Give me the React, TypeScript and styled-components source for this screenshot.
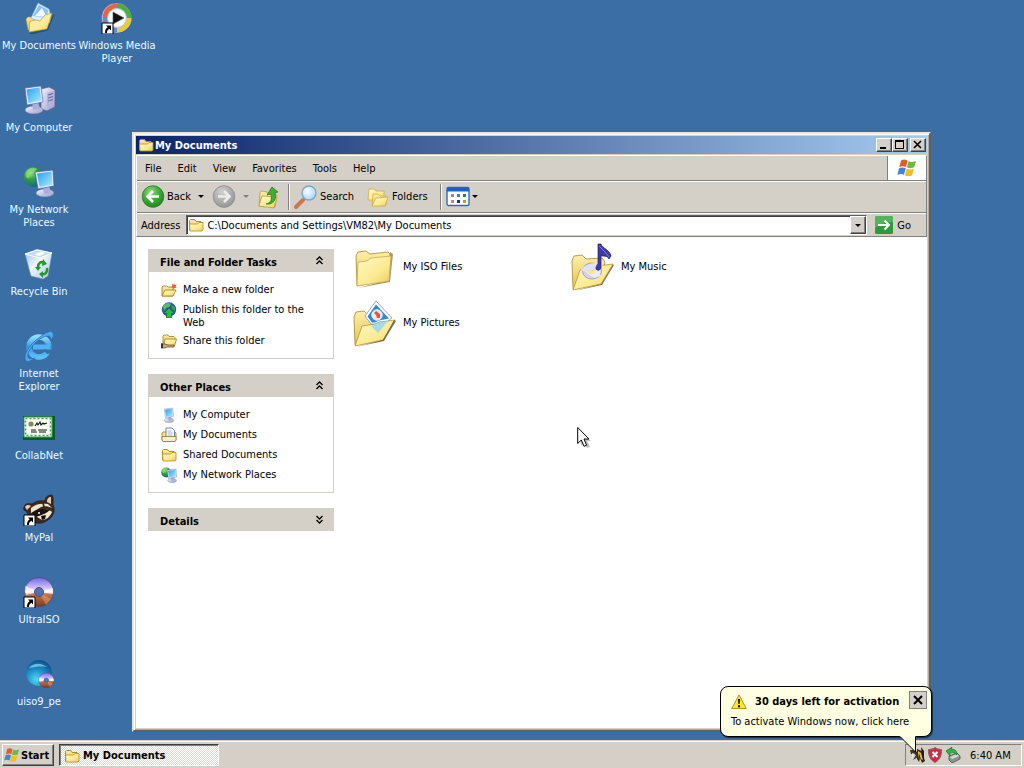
import React from "react";
import styled, { createGlobalStyle, css } from "styled-components";

const face = "#d4d0c8";

const GlobalStyle = createGlobalStyle`
  * { box-sizing: border-box; }
  html, body { margin: 0; height: 100%; overflow: hidden; }
  #root { height: 100%; }
  body, button, input {
    font-family: "DejaVu Sans Condensed", "DejaVu Sans", sans-serif;
    font-size: 11px;
    line-height: 13px;
    color: #000;
  }
  button { border: 0; padding: 0; background: none; cursor: inherit; }
  a { color: inherit; text-decoration: none; cursor: inherit; }
  svg { display: block; flex: none; }
  ul { list-style: none; margin: 0; padding: 0; }
`;

const raised = css`
  border: 1px solid;
  border-color: #fff #404040 #404040 #fff;
  box-shadow: inset -1px -1px 0 #808080;
  background: ${face};
`;

const Screen = styled.div`
  height: 100%;
  display: flex;
  flex-direction: column;
  background: #3a6ea5;
  cursor: default;
`;

const Desktop = styled.main`
  position: relative;
  flex: 1;
  min-height: 0;
  display: flex;
`;

const IconColumn = styled.ul`
  width: 78px;
  display: grid;
  grid-auto-rows: 82px;
  align-content: start;
`;

const DesktopIcon = styled.a`
  display: flex;
  flex-direction: column;
  align-items: center;
  gap: 5px;
  padding-top: 2px;
  text-align: center;
  color: #eafcff;
`;

/* ---------- explorer window ---------- */

const Window = styled.section`
  position: absolute;
  top: 132px;
  left: 132px;
  right: 93px;
  bottom: 8px;
  display: flex;
  flex-direction: column;
  padding: 2px;
  background: ${face};
  border: 2px solid;
  border-color: #e8e6e0 #606060 #606060 #e8e6e0;
  box-shadow: inset 1px 1px 0 #fff, inset -1px -1px 0 #b0aca4;
`;

const TitleBar = styled.header`
  height: 18px;
  display: flex;
  align-items: center;
  gap: 1px;
  padding: 0 1px 0 2px;
  background: linear-gradient(to right, #0a246a, #a6caf0);
`;

const Title = styled.h1`
  flex: 1;
  margin: 0;
  font-size: 11px;
  color: #fff;
`;

const CaptionButtons = styled.div`
  display: flex;
`;

const CaptionButton = styled.button<{ $apart?: boolean }>`
  ${raised}
  width: 16px;
  height: 14px;
  margin-left: ${(p) => (p.$apart ? 2 : 0)}px;
  display: grid;
  place-items: center;
`;

const Bars = styled.div`
  margin-top: 1px;
  border: 1px solid #808080;
  border-color: #fff #808080 #808080 #fff;
`;

const Bar = styled.div<{ $height: number }>`
  height: ${(p) => p.$height}px;
  display: flex;
  align-items: center;
  & + & {
    border-top: 1px solid #808080;
    box-shadow: inset 0 1px 0 #fff;
  }
`;

const Menu = styled.nav`
  flex: 1;
  display: flex;
`;

const MenuItem = styled.button`
  padding: 0 8px;
`;

const Brand = styled.div`
  width: 39px;
  height: 100%;
  display: grid;
  place-items: center;
  background: #fff;
  border-left: 1px solid #808080;
`;

const ToolBar = styled(Bar)`
  padding: 0 4px;
`;

const ToolButton = styled.button<{ $after?: number }>`
  display: flex;
  align-items: center;
  gap: 2px;
  margin-right: ${(p) => p.$after ?? 7}px;
`;

const Caret = styled.span<{ $muted?: boolean; $after?: number }>`
  margin-right: ${(p) => p.$after ?? 0}px;
  border: 3px solid transparent;
  border-bottom: 0;
  border-top-color: ${(p) => (p.$muted ? "#808080" : "#000")};
`;

const Separator = styled.span`
  width: 2px;
  height: 26px;
  border-left: 1px solid #808080;
  border-right: 1px solid #fff;
  margin-right: 4px;
`;

const AddressBar = styled(Bar).attrs({ as: "form" })`
  padding: 1px 4px 0;
  gap: 6px;
`;

const AddressField = styled.div`
  flex: 1;
  height: 20px;
  display: flex;
  align-items: center;
  gap: 3px;
  padding-left: 1px;
  background: #fff;
  border: 1px solid;
  border-color: #606060 #fff #fff #606060;
  box-shadow: inset 1px 1px 0 #404040;
`;

const AddressInput = styled.input`
  flex: 1;
  min-width: 0;
  border: 0;
  padding: 0;
  outline: 0;
  background: transparent;
`;

const DropButton = styled.button`
  ${raised}
  width: 16px;
  height: 18px;
  display: grid;
  place-items: center;
`;

const GoButton = styled.button`
  display: flex;
  align-items: center;
  gap: 4px;
  padding: 0 11px 0 2px;
`;

const Body = styled.div`
  flex: 1;
  min-height: 0;
  display: flex;
  background: #fff;
`;

const TaskPane = styled.aside`
  width: 198px;
  padding: 12px 0 0 12px;
  display: flex;
  flex-direction: column;
  gap: 15px;
`;

const PanelHead = styled.button`
  width: 100%;
  height: 23px;
  display: flex;
  align-items: center;
  justify-content: space-between;
  padding: 0 10px 0 12px;
  font-weight: bold;
  background: ${face};
  span { padding-top: 3px; }
`;

const PanelBody = styled.ul`
  display: flex;
  flex-direction: column;
  gap: 4px;
  padding: 10px 12px 9px;
  border: 1px solid ${face};
  border-top: 0;
`;

const TaskLink = styled.a`
  display: flex;
  gap: 6px;
  min-height: 16px;
  span { padding-top: 1px; }
`;

const Files = styled.ul`
  flex: 1;
  display: grid;
  grid-template-columns: repeat(auto-fill, 218px);
  grid-auto-rows: 56px;
  padding: 2px 0 0 17px;
`;

const FileItem = styled.a`
  height: 100%;
  display: flex;
  align-items: center;
  gap: 4px;
  span { padding-bottom: 2px; }
`;

const Pointer = styled.div`
  position: absolute;
  left: 577px;
  top: 426px;
`;

/* ---------- taskbar ---------- */

const TaskBar = styled.footer`
  height: 28px;
  display: flex;
  gap: 5px;
  padding: 2px;
  background: ${face};
  border-top: 1px solid ${face};
  box-shadow: inset 0 1px 0 #fff;
`;

const StartButton = styled.button`
  ${raised}
  height: 22px;
  width: 52px;
  margin-top: 1px;
  display: flex;
  align-items: center;
  gap: 1px;
  padding-left: 1px;
  font-weight: bold;
`;

const TaskButton = styled.button`
  width: 160px;
  height: 22px;
  margin-top: 1px;
  display: flex;
  align-items: center;
  gap: 3px;
  padding: 1px 0 0 4px;
  font-weight: bold;
  border: 1px solid;
  border-color: #404040 #fff #fff #404040;
  box-shadow: inset 1px 1px 0 #808080;
  background: repeating-conic-gradient(#fff 0 25%, #dcd9d2 0 50%) 0 0 / 2px 2px;
`;

const Tray = styled.div`
  position: relative;
  height: 22px;
  width: 117px;
  margin: 1px 0 0 auto;
  display: flex;
  align-items: center;
  gap: 2px;
  padding-left: 3px;
  border: 1px solid;
  border-color: #808080 #fff #fff #808080;
  time { margin-left: 7px; }
`;

const Balloon = styled.aside`
  position: absolute;
  right: 89px;
  bottom: 28px;
  width: 212px;
  height: 51px;
  padding: 3px 4px 0 10px;
  background: #ffffe1;
  border: 1px solid #000;
  border-radius: 8px;
  box-shadow: 1px 1px 1px rgba(0, 0, 0, 0.6);
`;

const BalloonHead = styled.div`
  display: flex;
  align-items: center;
  gap: 8px;
  height: 19px;
  strong { flex: 1; padding-top: 4px; white-space: nowrap; }
  svg { margin-top: 4px; }
  button svg { margin: 0; }
`;

const BalloonClose = styled.button`
  width: 18px;
  height: 18px;
  display: grid;
  place-items: center;
  background: ${face};
  border: 1px solid #808080;
`;

const BalloonText = styled.a`
  display: block;
  padding-top: 6px;
  white-space: nowrap;
`;

const BalloonTail = styled.svg`
  position: absolute;
  right: 13px;
  top: 48px;
`;

/* ---------- drawings ---------- */

const Defs = () => (
  <svg width="0" height="0" aria-hidden="true">
    <defs>
      <linearGradient id="fold" x1="0" y1="0" x2="1" y2="1">
        <stop offset="0" stopColor="#fffac8" />
        <stop offset=".6" stopColor="#fbea90" />
        <stop offset="1" stopColor="#efca54" />
      </linearGradient>
      <linearGradient id="foldBack" x1="0" y1="0" x2="0" y2="1">
        <stop offset="0" stopColor="#fdf0a8" />
        <stop offset="1" stopColor="#e6c254" />
      </linearGradient>
      <linearGradient id="screen" x1="0" y1="0" x2="1" y2="1">
        <stop offset="0" stopColor="#2f9bee" />
        <stop offset="1" stopColor="#a8eeff" />
      </linearGradient>
      <linearGradient id="case" x1="0" y1="0" x2="1" y2="1">
        <stop offset="0" stopColor="#f4f3fb" />
        <stop offset="1" stopColor="#9a9cc8" />
      </linearGradient>
      <radialGradient id="globe" cx=".35" cy=".3" r=".8">
        <stop offset="0" stopColor="#9fe09a" />
        <stop offset=".4" stopColor="#2fa043" />
        <stop offset="1" stopColor="#145a8c" />
      </radialGradient>
      <radialGradient id="green" cx=".4" cy=".3" r=".8">
        <stop offset="0" stopColor="#8fe07c" />
        <stop offset=".5" stopColor="#3cab36" />
        <stop offset="1" stopColor="#1c7a1c" />
      </radialGradient>
      <radialGradient id="grey" cx=".4" cy=".3" r=".8">
        <stop offset="0" stopColor="#cfcfcf" />
        <stop offset="1" stopColor="#8f8f8f" />
      </radialGradient>
      <radialGradient id="lens" cx=".4" cy=".35" r=".7">
        <stop offset="0" stopColor="#fff" />
        <stop offset="1" stopColor="#9fd4f6" />
      </radialGradient>
      <linearGradient id="disc" x1="0" y1="0" x2="0" y2="1">
        <stop offset="0" stopColor="#7068e0" />
        <stop offset=".3" stopColor="#c0b0fa" />
        <stop offset=".5" stopColor="#f4f0ff" />
        <stop offset=".56" stopColor="#c87850" />
        <stop offset="1" stopColor="#7c3a1e" />
      </linearGradient>
      <linearGradient id="ie" x1="0" y1="0" x2="0" y2="1">
        <stop offset="0" stopColor="#8fdcff" />
        <stop offset=".5" stopColor="#2f98e4" />
        <stop offset="1" stopColor="#5cc0f8" />
      </linearGradient>
      <radialGradient id="aqua" cx=".4" cy=".75" r=".8">
        <stop offset="0" stopColor="#50d8f0" />
        <stop offset=".5" stopColor="#1c8cc8" />
        <stop offset="1" stopColor="#0c4888" />
      </radialGradient>
      <linearGradient id="bin" x1="0" y1="0" x2="1" y2="1">
        <stop offset="0" stopColor="#8fb8ea" />
        <stop offset=".45" stopColor="#f0f6ff" />
        <stop offset="1" stopColor="#a9c0dc" />
      </linearGradient>
    </defs>
  </svg>
);

type IconProps = { size: number; box?: string; children: React.ReactNode };
const Icon = ({ size, box = "0 0 32 32", children }: IconProps) => (
  <svg width={size} height={size} viewBox={box} aria-hidden="true">
    {children}
  </svg>
);

const Shortcut = () => (
  <g>
    <path d="M1 21h11v11H1z" fill="#fff" stroke="#000" strokeWidth="1" />
    <path d="M5 23.500h5v5l-1.700-1.700C6.500 28 6 29 6 31H4c0-3 .8-4.500 2.700-5.800z" fill="#000" />
  </g>
);

const FolderSmall = () => (
  <Icon size={16} box="0 0 16 16">
    <path d="M1.500 13V3.500l1-1h4l1.500 2h5l1 1V13z" fill="url(#foldBack)" stroke="#b08c28" />
    <path d="M1.500 7h8l1.500-1.500h4V13l-1 1h-12z" fill="url(#fold)" stroke="#b58a20" strokeWidth=".8" />
  </Icon>
);

const DocumentsIcon = () => (
  <Icon size={32}>
    <path d="m5 28-2-11 2-2h4l3 2 16-6-1 10z" fill="url(#foldBack)" stroke="#b8922c" strokeWidth=".6" />
    <path d="M8 16 15 1l11 6 2 8-10 6z" fill="#d8f0ff" stroke="#6fa8dc" strokeWidth=".6" />
    <path d="m10 14 6-11 9 5-1 8z" fill="#8cc0f0" />
    <path d="m12 14 7-8 5 9z" fill="#eefaff" />
    <path d="m6 30 1-11 6-1 4 1 5-6 7-2-5 16z" fill="url(#fold)" stroke="#b8922c" strokeWidth=".6" />
    <path d="m6 31 18-3.500 6-15 1 1-6 15-17 4z" fill="#204468" opacity=".7" />
  </Icon>
);

const Monitor = () => (
  <>
    <ellipse cx="11" cy="26" rx="9" ry="4" fill="url(#case)" stroke="#7074a4" strokeWidth=".6" />
    <path d="m9 18 6-1 2 8-7 1z" fill="#a9aed8" />
    <path d="m2 4 16-2 2 16-16 3z" fill="#e6ecfa" stroke="#5a6ca8" strokeWidth=".7" />
    <path d="m3.500 5.500 13-2 2 13-13 2.500z" fill="url(#screen)" />
  </>
);

const ComputerIcon = () => (
  <Icon size={32}>
    <path d="m18 5 8-2 6 3v17l-8 4-6-2z" fill="url(#case)" stroke="#5d5f98" strokeWidth=".7" />
    <path d="m24 9 7-2v14l-7 4z" fill="#b4b2dc" />
    <path d="m25 11 5-1.500M25 14l5-1.500M25 17l5-1.500" stroke="#6c6aa8" strokeWidth="1.200" />
    <Monitor />
  </Icon>
);

const NetworkIcon = ({ size = 32 }: { size?: number }) => (
  <Icon size={size}>
    <circle cx="10.500" cy="11" r="10" fill="url(#globe)" />
    <path d="M4 5c3-4 8-4 10-2-2 2-2 4-5 4s-1 5-4 5-3-4-1-7z" fill="#8ede74" opacity=".7" />
    <g transform="translate(11 2)">
      <ellipse cx="11" cy="25" rx="9" ry="4" fill="url(#case)" stroke="#7074a4" strokeWidth=".6" />
      <path d="m9 18 6-1 2 8-7 1z" fill="#a9aed8" />
      <path d="m1 4 18-2 1 16-16 3z" fill="#e6ecfa" stroke="#3a5ca0" strokeWidth=".7" />
      <path d="m3 5.500 14.500-2 1 13-13 2.500z" fill="url(#screen)" />
    </g>
  </Icon>
);

const MonitorIcon = () => (
  <Icon size={16} box="0 0 22 31">
    <Monitor />
  </Icon>
);

const MediaPlayerIcon = () => (
  <Icon size={32}>
    <circle cx="15.500" cy="16" r="15" fill="#e8f0fa" stroke="#34507c" strokeWidth=".6" />
    <path d="M16 16V1.500A14.500 14.500 0 0 1 30.500 16z" fill="#4cae3c" />
    <path d="M16 16h14.500A14.500 14.500 0 0 1 16 30.500z" fill="#ecc83c" />
    <path d="M16 16v14.500A14.500 14.500 0 0 1 1.500 16z" fill="#5c8cdc" />
    <path d="M16 16H1.500A14.500 14.500 0 0 1 16 1.500z" fill="#e86440" />
    <circle cx="16" cy="16" r="9.500" fill="#f8fbff" stroke="#b9c7d8" />
    <path d="m12 10 11 6-11 6z" fill="#111" stroke="#555" strokeWidth=".6" />
    <Shortcut />
  </Icon>
);

const BinIcon = () => (
  <Icon size={32}>
    <path d="m2 6 12-5 15 4-4 23-5 3-12-3z" fill="url(#bin)" stroke="#6f93c0" strokeWidth=".6" />
    <path d="m2 6 12-4 15 3-12 5z" fill="#c4dcf8" stroke="#fff" strokeWidth="1" />
    <path d="M12 7c2-3 8-4 10-2l-5 3z" fill="#fff" />
    <g fill="none" stroke="#249a2c" strokeWidth="2.600">
      <path d="M15 19c0-4 3-6 6-4" />
      <path d="M24 20c1 4-2 7-5 6" />
    </g>
    <path d="m20 11 4 5-5 2zM20 30l-4-4 4-3zM12 19h6l-3 4z" fill="#249a2c" />
  </Icon>
);

const ExplorerIcon = () => (
  <Icon size={32}>
    <circle cx="16" cy="17" r="10" fill="none" stroke="url(#ie)" strokeWidth="5.500" />
    <path d="M10 14.500h17v5H10z" fill="#50b4f4" />
    <path d="M20 19.500h12v3.500l-8 1z" fill="#3a6ea5" />
    <path d="M3 31C0 27 4 18 12 11S28-1 30 3c1 2 0 5-2 7 0-4-2-5-7-3C13 10 6 19 5 24c-1 4 1 6 7 4-4 3-7 4-9 3z" fill="#4cacec" stroke="#1f68b4" strokeWidth=".6" />
  </Icon>
);

const CollabIcon = () => (
  <Icon size={32}>
    <path d="M0 4h32v24H0z" fill="#0c5a2a" />
    <path d="M1 5h28v20H1z" fill="#f6fcec" stroke="#3ca45c" />
    <path d="M2.500 6.500h25v17h-25z" fill="none" stroke="#4c9c64" strokeWidth="1.500" strokeDasharray="2 2" />
    <path d="M5 9h20v12H5z" fill="#fbfff4" />
    <circle cx="8" cy="12" r="2.600" fill="#8a8a58" />
    <path d="m12 14 2-3 1 2 2-3 1 3 2-2 1 1 3-1M8 18h5m2 0h9M8 20h6m2 0h7" fill="none" stroke="#111" strokeWidth="1.100" />
  </Icon>
);

const RaccoonIcon = () => (
  <Icon size={32}>
    <path d="M1 13c1-4 5-4 8-3 4-3 8-4 13-3 0-4 3-6 7-6 2 3 1 6 1 10 3 5 0 12-5 15-5 4-11 4-14 2-5-3-6-8-8-11-2 0-3-2-2-4z" fill="#3c2a1c" stroke="#241810" strokeWidth=".6" />
    <path d="M2 13c2-3 4-2 6-1l-4 4zM24 8c0-4 2-5 4-5l0 7z" fill="#e6ccb0" />
    <path d="M8 14c4-4 10-5 17-4l4 4c-6-3-11-2-14 1l-7 4z" fill="#f0e4cc" />
    <path d="M11 21c4-1 6-3 9-5 4-1 7 0 9 2-2 5-6 8-10 8z" fill="#f2e8d6" />
    <path d="M9 19c4-4 10-5 18-3-4 4-9 5-14 7z" fill="#1b1310" />
    <path d="m18 22 5-1-1 4-3 1z" fill="#100c0a" />
    <circle cx="16" cy="19" r="1" fill="#fff" />
    <path d="m20 9 1 4" stroke="#2e2016" strokeWidth="1.500" />
    <Shortcut />
  </Icon>
);

const Disc = () => (
  <>
    <circle cx="16" cy="16" r="14.500" fill="url(#disc)" stroke="#4a3c6c" strokeWidth=".6" />
    <path d="M16 16 2 10l1 9zM16 16l14-4 0 6z" fill="#fff" opacity=".65" />
    <path d="m16 16 12 7-5 6z" fill="#f0a070" opacity=".5" />
    <circle cx="16" cy="16" r="4.500" fill="#4a74b0" stroke="#554a80" />
  </>
);

const UltraIsoIcon = () => (
  <Icon size={32}>
    <Disc />
    <Shortcut />
  </Icon>
);

const UisoIcon = () => (
  <Icon size={32}>
    <circle cx="16" cy="15" r="13" fill="url(#aqua)" />
    <path d="M6 10c5-6 13-5 18-1-7-1-12 0-18 1z" fill="#a8ecfa" opacity=".6" />
    <g transform="translate(15 14) scale(.52)">
      <Disc />
    </g>
  </Icon>
);

const WindowsFlag = ({ size }: { size: number }) => (
  <Icon size={size} box="0 0 20 20">
    <path d="M4 2.500c3-1.500 4.500-1 6.500.2L9 9C7 8 5 7.800 2.300 9z" fill="#e8592b" />
    <path d="M11.500 3.200c2.500 1.200 4.500 1 7.500-.2l-1.800 6.300c-2.600 1-4.600 1.200-7.200 0z" fill="#6dbb3c" />
    <path d="M2 10.200c2.700-1.200 4.700-.9 6.700.1L7 16.800c-2-1-4-1.200-6.700 0z" fill="#3f86dc" />
    <path d="M9.700 10.700c2.600 1.100 4.600 1 7.200 0L15 17.400c-2.600 1-4.500 1-7 0z" fill="#f4bc28" />
  </Icon>
);

const RoundArrow = ({ back }: { back?: boolean }) => (
  <Icon size={24} box="0 0 24 24">
    <circle cx="12" cy="11.500" r="10.800" fill={back ? "url(#green)" : "url(#grey)"} stroke={back ? "#2a7c26" : "#888"} strokeWidth=".8" />
    <path
      d={back ? "M18 11.500H7m5-5.500-5.500 5.500L12 17" : "M6 11.500h11M12 6l5.500 5.500L12 17"}
      fill="none"
      stroke={back ? "#fff" : "#ececec"}
      strokeWidth="2.600"
    />
  </Icon>
);

const UpFolderIcon = () => (
  <Icon size={24} box="0 0 24 24">
    <path d="m2 21 1-14 2-1 5 1 1 2 9 1-2 12z" fill="url(#foldBack)" stroke="#b8922c" strokeWidth=".7" />
    <path d="m2 21 3-10 15 1-3 11z" fill="url(#fold)" stroke="#b8922c" strokeWidth=".7" />
    <path d="M9 19c5-1 6-4 5-10l-4 1 5-8 6 5-3 1c2 7-2 12-9 11z" fill="#3cb034" stroke="#1a7a1c" strokeWidth=".7" />
  </Icon>
);

const SearchIcon = () => (
  <Icon size={24} box="0 0 24 24">
    <path d="m2 22 7-7" stroke="#c87850" strokeWidth="4" strokeLinecap="round" />
    <circle cx="15" cy="8" r="7" fill="url(#lens)" stroke="#78a8d0" strokeWidth="1.400" />
  </Icon>
);

const FoldersIcon = () => (
  <Icon size={24} box="0 0 24 24">
    <path d="m2 15 1-11h5l2 2h8v9z" fill="url(#fold)" stroke="#d0ac44" strokeWidth=".8" />
    <path d="m6 20 1-11h5l2 2h6v9z" fill="url(#foldBack)" stroke="#d0ac44" strokeWidth=".8" />
    <path d="m6 21 4-8 12-1-3 9z" fill="url(#fold)" stroke="#d0ac44" strokeWidth=".8" />
  </Icon>
);

const ViewsIcon = () => (
  <Icon size={24} box="0 0 24 24">
    <rect x="1" y="2.500" width="22" height="18" rx="1.500" fill="#fff" stroke="#2a6cc8" strokeWidth="1.400" />
    <path d="M1 2.500h22v4H1z" fill="#1f5fc0" />
    <path d="M5 9h3v3H5z" fill="#7c90b8" />
    <path d="M11 9h3v3h-3z" fill="#4c78b8" />
    <path d="M17 9h3v3h-3z" fill="#208c30" />
    <path d="M5 15h3v3H5z" fill="#e08060" />
    <path d="M11 15h3v3h-3z" fill="#103c74" />
    <path d="M17 15h3v3h-3z" fill="#c09840" />
  </Icon>
);

const GoIcon = () => (
  <Icon size={18} box="0 0 18 18">
    <rect width="18" height="18" rx="1.500" fill="#2f9a3c" />
    <path d="M0 1.500Q0 0 2 0h14q2 0 2 1.500V6Q8 6 0 12z" fill="#6cc46a" opacity=".6" />
    <path d="M3 9h11M9.500 4.500 14 9l-4.500 4.500" fill="none" stroke="#fff" strokeWidth="2" />
  </Icon>
);

const Chevrons = ({ down }: { down?: boolean }) => (
  <Icon size={9} box="0 0 9 9">
    <path
      d={down ? "M1.500 1 4.500 4l3-3M1.500 5l3 3 3-3" : "m1.500 4 3-3 3 3m-6 4 3-3 3 3"}
      fill="none"
      stroke="#000"
      strokeWidth="1.300"
    />
  </Icon>
);

const NewFolderIcon = () => (
  <Icon size={16} box="0 0 16 16">
    <path d="m1 14 0-9 1-1h4l1 1h5v9z" fill="url(#foldBack)" stroke="#a27c1a" strokeWidth=".8" />
    <path d="m1 14 3-6h11l-3 6z" fill="url(#fold)" stroke="#a27c1a" strokeWidth=".8" />
    <path d="m13 1 .8 2 2-.4-1.200 1.700 1 1.700-2-.3-1 2-.5-2.200-2 .1 1.400-1.500-.8-2 2 .7z" fill="#e8582c" />
  </Icon>
);

const PublishIcon = () => (
  <Icon size={16} box="0 0 16 16">
    <circle cx="8" cy="7.500" r="7.200" fill="#1c5fa8" />
    <path d="M2 4c2-3 6-4 8-2L8 5 5 6 3 9z" fill="#5cbc58" />
    <path d="m10 3 4 2v4l-3-2z" fill="#3c9c4c" />
    <path d="m8 6 5.500 5.500H10.500V16h-5v-4.500h-3z" fill="#2cb83c" stroke="#0f6c20" strokeWidth=".7" />
  </Icon>
);

const ShareIcon = () => (
  <Icon size={16} box="0 0 16 16">
    <path d="m2 10 0-7 1-1h4l1 1.500h5l1 1-1 7z" fill="url(#foldBack)" stroke="#a27c1a" strokeWidth=".8" />
    <path d="m3 12 1-6h11.500l-2 7z" fill="url(#fold)" stroke="#a27c1a" strokeWidth=".8" />
    <path d="M0 11h4l3 1h6v2H6l-2 1H0z" fill="#d8a878" stroke="#5a3c1c" strokeWidth=".7" />
    <path d="M0 10.500h2V15H0z" fill="#333" />
  </Icon>
);

const DocsSmallIcon = () => (
  <Icon size={16} box="0 0 16 16">
    <path d="M1 13V6l1-1h12l1 1v7l-1 1.500H2z" fill="url(#foldBack)" stroke="#a27c1a" strokeWidth=".8" />
    <path d="M5 10V1h6l2.500 2.500V10z" fill="#fff" stroke="#5c78a8" strokeWidth=".9" />
    <path d="M6.500 4h4M6.500 6h5M6.500 8h5" stroke="#88a4cc" strokeWidth=".8" />
    <path d="M1 9.500h14V13l-1 1.500H2L1 13z" fill="#f4f0c8" stroke="#8c7c3c" strokeWidth=".8" />
  </Icon>
);

const BigFolder = () => (
  <Icon size={48} box="0 0 48 48">
    <path d="m7 45 32-6 3-28-3-2-2 28z" fill="#7c6c48" opacity=".7" />
    <path d="m6 43-1-30 2-4 8-1 4 3 18-2 2 2-1 25z" fill="url(#foldBack)" stroke="#a8872c" strokeWidth=".8" />
    <path d="m6 43 1-24 9-1 4-3 20-2-2 25z" fill="url(#fold)" stroke="#c8a850" strokeWidth=".8" />
  </Icon>
);

const FolderBack = () => (
  <path d="m4 46-1-28 2-5 8-1 4 4 16-1 3 4-3 22z" fill="url(#foldBack)" stroke="#a8872c" strokeWidth=".8" />
);

const FolderFront = () => (
  <>
    <path d="m5 48 28-6 12-20-2-1-11 20z" fill="#5c5238" opacity=".8" />
    <path d="m4 47 7-20 13-2 4-2 16-2-12 20z" fill="url(#fold)" stroke="#b8963c" strokeWidth=".8" />
  </>
);

const MusicFolder = () => (
  <Icon size={48} box="0 0 48 48">
    <FolderBack />
    <FolderFront />
    <ellipse cx="23" cy="28" rx="9.500" ry="8" fill="#d4d2ee" stroke="#9490b8" strokeWidth=".8" />
    <path d="m14 27 8 2 10-5-1 9-6 2z" fill="#f2f0ff" opacity=".8" />
    <path d="M12 26q10-8 22-6l-1 4-6 1-4 2-10 1z" fill="#e4e2f4" opacity=".9" />
    <path d="m18 28 6-1 3-1q0 4-4 5-4 0-5-3z" fill="#f6e68c" />
    <path d="M29 21V1h3c1 4 9 6 10 12l-2 3c-1-3-5-3-8-3v12c-1 3-5 3-5 0 0-2 1-3 2-4z" fill="#4038a4" stroke="#241c6c" strokeWidth=".7" />
    <path d="m30 3 6 6 4 5" fill="none" stroke="#8480d8" />
  </Icon>
);

const PictureFolder = () => (
  <Icon size={48} box="0 0 48 48">
    <FolderBack />
    <path d="m4 47 7-20 13-2 4-2 16-2-12 20z" fill="url(#fold)" stroke="#b8963c" strokeWidth=".8" />
    <path d="m5 48 28-6 12-20-2-1-11 20z" fill="#5c5238" opacity=".8" />
    <path d="M14 17 25 2l16 17-4 3-9 1-4 2-4 0z" fill="#fff" stroke="#8aa0b8" strokeWidth=".9" />
    <path d="M16.500 17.500 25 5.500l13 14-10 2-4 2h-3z" fill="#3088d4" />
    <circle cx="26" cy="16" r="5.300" fill="#fbe8e4" stroke="#d8ecfc" />
    <path d="m23 14 2-2 4 3 0 4-3 0-1-3z" fill="#dc5848" />
    <path d="m20 27 5-2 3-2 9-1-10 12z" fill="#98d4f4" opacity=".85" />
  </Icon>
);

const WarningIcon = () => (
  <Icon size={16} box="0 0 16 16">
    <path d="M8 1 15.300 14.500H.7z" fill="#ffe820" stroke="#a08c10" strokeWidth=".9" strokeLinejoin="round" />
    <path d="M7 5h2l-.4 5H7.400zM7 11.200h2v2H7z" fill="#000" />
  </Icon>
);

const KeysIcon = () => (
  <Icon size={16} box="0 0 16 16">
    <path d="M1 3h5l3 3v4L4 13l3-5-5-1z" fill="#3c3424" />
    <path d="m3 6 3 1-3 5z" fill="#e8e4d8" />
    <path d="m8 2 5 2 3 10-3 2-2-5-1 4-2-3z" fill="#3c2c14" />
    <path d="m9 4 3 2 2 7-2-1-2-6-1 6z" fill="#e8bc58" />
    <path d="m12 0 3 4v11l-2-6z" fill="#2c1c0c" />
  </Icon>
);

const ShieldIcon = () => (
  <Icon size={16} box="0 0 16 16">
    <path d="M8 .5c2 1.500 4 1.800 6.500 2C15 9 12 13.500 8 15.500 4 13.500 1 9 1.500 2.500 4 2.300 6 2 8 .5z" fill="#cc2c44" stroke="#8c5c64" strokeWidth=".9" />
    <path d="m5.500 5 5 5m0-5-5 5" stroke="#fff" strokeWidth="2" />
  </Icon>
);

const DeviceIcon = () => (
  <Icon size={16} box="0 0 16 16">
    <path d="m4 9 8-3 3 3v3l-8 4-3-3z" fill="#8c9490" stroke="#4c5450" strokeWidth=".8" />
    <path d="m5 10 7-3 2 2-7 3z" fill="#d4dcd8" />
    <path d="m1 4 6-4-1 2c4 0 6 2 6 6-2-2-4-3-7-2l0 3z" fill="#2cb43c" stroke="#14742c" strokeWidth=".7" />
  </Icon>
);

/* ---------- content ---------- */

const firstColumn: [string, React.ReactNode][] = [
  ["My Documents", <DocumentsIcon />],
  ["My Computer", <ComputerIcon />],
  ["My Network Places", <NetworkIcon />],
  ["Recycle Bin", <BinIcon />],
  ["Internet Explorer", <ExplorerIcon />],
  ["CollabNet", <CollabIcon />],
  ["MyPal", <RaccoonIcon />],
  ["UltraISO", <UltraIsoIcon />],
  ["uiso9_pe", <UisoIcon />],
];
const secondColumn: [string, React.ReactNode][] = [["Windows Media Player", <MediaPlayerIcon />]];

const menus = ["File", "Edit", "View", "Favorites", "Tools", "Help"];

const panels: { title: string; links?: [string, React.ReactNode][] }[] = [
  {
    title: "File and Folder Tasks",
    links: [
      ["Make a new folder", <NewFolderIcon />],
      ["Publish this folder to the Web", <PublishIcon />],
      ["Share this folder", <ShareIcon />],
    ],
  },
  {
    title: "Other Places",
    links: [
      ["My Computer", <MonitorIcon />],
      ["My Documents", <DocsSmallIcon />],
      ["Shared Documents", <FolderSmall />],
      ["My Network Places", <NetworkIcon size={16} />],
    ],
  },
  { title: "Details" },
];

const files: [string, React.ReactNode][] = [
  ["My ISO Files", <BigFolder />],
  ["My Music", <MusicFolder />],
  ["My Pictures", <PictureFolder />],
];

const DesktopColumn = ({ items }: { items: [string, React.ReactNode][] }) => (
  <IconColumn>
    {items.map(([label, icon]) => (
      <li key={label}>
        <DesktopIcon href="#">
          {icon}
          <span>{label}</span>
        </DesktopIcon>
      </li>
    ))}
  </IconColumn>
);

export default function App() {
  return (
    <Screen>
      <GlobalStyle />
      <Desktop>
        <DesktopColumn items={firstColumn} />
        <DesktopColumn items={secondColumn} />

        <Window aria-label="My Documents">
          <TitleBar>
            <FolderSmall />
            <Title>My Documents</Title>
            <CaptionButtons>
              <CaptionButton aria-label="Minimize">
                <Icon size={10} box="0 0 10 10"><path d="M1 7h6v2H1z" /></Icon>
              </CaptionButton>
              <CaptionButton aria-label="Maximize">
                <Icon size={10} box="0 0 10 10"><path d="M0 0h9v9H0zM1 2v6h7V2z" fillRule="evenodd" /></Icon>
              </CaptionButton>
              <CaptionButton $apart aria-label="Close">
                <Icon size={10} box="0 0 10 10"><path d="m1 1 7 7m0-7L1 8" stroke="#000" strokeWidth="1.600" /></Icon>
              </CaptionButton>
            </CaptionButtons>
          </TitleBar>

          <Bars>
            <Bar $height={24}>
              <Menu>
                {menus.map((m) => (
                  <MenuItem key={m}>{m}</MenuItem>
                ))}
              </Menu>
              <Brand><WindowsFlag size={20} /></Brand>
            </Bar>
            <ToolBar $height={32}>
              <ToolButton $after={7}><RoundArrow back />Back</ToolButton>
              <Caret $after={8} />
              <ToolButton aria-label="Forward" $after={7}><RoundArrow /></ToolButton>
              <Caret $muted $after={8} />
              <ToolButton aria-label="Up" $after={7}><UpFolderIcon /></ToolButton>
              <Separator />
              <ToolButton $after={12}><SearchIcon />Search</ToolButton>
              <ToolButton $after={12}><FoldersIcon />Folders</ToolButton>
              <Separator />
              <ToolButton aria-label="Views"><ViewsIcon /><Caret /></ToolButton>
            </ToolBar>
            <AddressBar $height={24}>
              <label htmlFor="address">Address</label>
              <AddressField>
                <FolderSmall />
                <AddressInput id="address" defaultValue="C:\Documents and Settings\VM82\My Documents" />
                <DropButton type="button" aria-label="Show addresses"><Caret /></DropButton>
              </AddressField>
              <GoButton type="button"><GoIcon />Go</GoButton>
            </AddressBar>
          </Bars>

          <Body>
            <TaskPane>
              {panels.map((p) => (
                <section key={p.title}>
                  <PanelHead><span>{p.title}</span><Chevrons down={!p.links} /></PanelHead>
                  {p.links && (
                    <PanelBody>
                      {p.links.map(([label, icon]) => (
                        <li key={label}>
                          <TaskLink href="#">{icon}<span>{label}</span></TaskLink>
                        </li>
                      ))}
                    </PanelBody>
                  )}
                </section>
              ))}
            </TaskPane>
            <Files>
              {files.map(([label, icon]) => (
                <li key={label}>
                  <FileItem href="#">{icon}<span>{label}</span></FileItem>
                </li>
              ))}
            </Files>
          </Body>
        </Window>

        <Pointer>
          <svg width="16" height="24" viewBox="0 0 16 24" aria-hidden="true">
            <path d="m3 4 11 11h-4l3 6-3 1-3-5-3 3z" fill="#000" opacity=".25" />
            <path d="M.7 1.500v16l3.600-3.500 2.700 6.300 2.600-1.100L7 13h5z" fill="#fff" stroke="#000" />
          </svg>
        </Pointer>
      </Desktop>

      <TaskBar>
        <StartButton><WindowsFlag size={16} />Start</StartButton>
        <TaskButton><FolderSmall />My Documents</TaskButton>
        <Tray>
          <Balloon>
            <BalloonHead>
              <WarningIcon />
              <strong>30 days left for activation</strong>
              <BalloonClose aria-label="Close">
                <Icon size={10} box="0 0 10 10"><path d="m1 1 8 8m0-8L1 9" stroke="#000" strokeWidth="2" /></Icon>
              </BalloonClose>
            </BalloonHead>
            <BalloonText href="#">To activate Windows now, click here</BalloonText>
            <BalloonTail width="20" height="20" viewBox="0 0 20 20" aria-hidden="true">
              <path d="M1 .500 17.500 17V.500" fill="#ffffe1" />
              <path d="M2 1.500 17.500 17V1.500" fill="none" stroke="#000" />
            </BalloonTail>
          </Balloon>
          <KeysIcon />
          <ShieldIcon />
          <DeviceIcon />
          <time>6:40 AM</time>
        </Tray>
      </TaskBar>
      <Defs />
    </Screen>
  );
}
